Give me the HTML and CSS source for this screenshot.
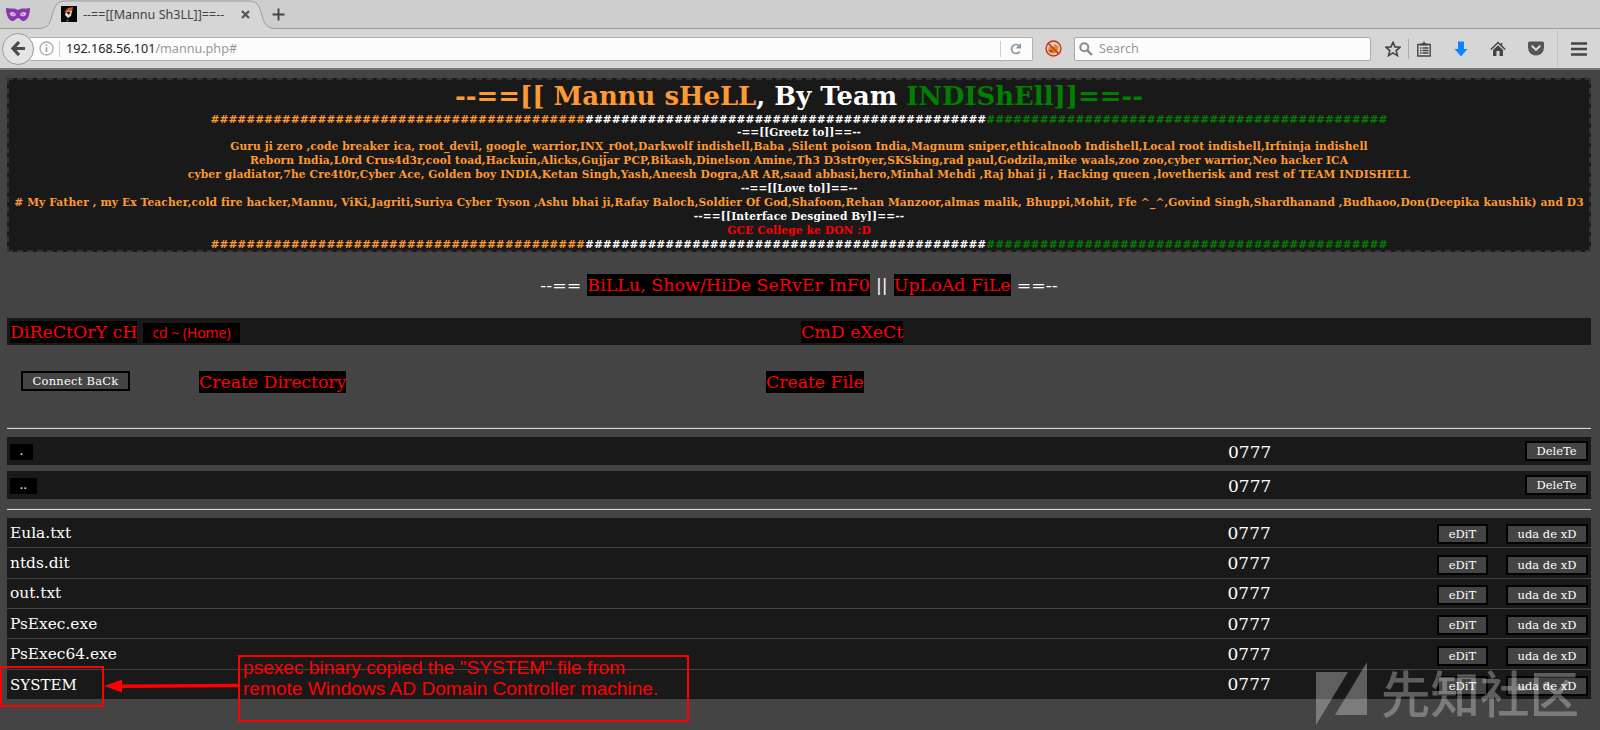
FILE: index.html
```html
<!DOCTYPE html>
<html lang="en">
<head>
<meta charset="utf-8">
<title>--==[[Mannu Sh3LL]]==--</title>
<link rel="stylesheet" href="styles.css">
</head>
<body>
<div class="browser">
  <div class="tabstrip">
    <svg class="tab-shape" width="290" height="30" viewBox="0 0 290 30"><path d="M0 28.500H38C50 28.500 50 22 52.500 14C55 5 57 1 66 1H248C257 1 259 5 261.500 14C264 22 265 28.500 276 28.500H290V30H0Z" fill="#d6d6d6"/><path d="M0 28.500H38C50 28.500 50 22 52.500 14C55 5 57 1 66 1H248C257 1 259 5 261.500 14C264 22 265 28.500 276 28.500H290" fill="none" stroke="#9a9da2"/></svg>
    <svg class="mask" width="24" height="15" viewBox="0 0 24 15"><path d="M0 1C5 2 8 .5 12 3C16 .5 19 2 24 1C24 6 22.500 13 18 14C15 14.500 14 11 12 11C10 11 9 14.500 6 14C1.500 13 0 6 0 1Z" fill="#8a35ac"/><path d="M3.500 6.500C6 4 9 5 10 8C8 10 5 10 3.500 6.500ZM20.500 6.500C18 4 15 5 14 8C16 10 19 10 20.500 6.500Z" fill="#dcc6e4"/><path d="M5.500 7.200C7 6 8 6.500 8.500 7.800C7.500 8.500 6.500 8.500 5.500 7.200ZM18.500 7.200C17 6 16 6.500 15.500 7.800C16.500 8.500 17.500 8.500 18.500 7.200Z" fill="#a56abf"/></svg>
    <svg class="favicon" width="16" height="16" viewBox="0 0 16 16"><path d="M0 0H16V16H0Z" fill="#080808"/><path d="M4 5L7 2L12 1L11 6L5 8Z" fill="#d85a24"/><path d="M5 6L11 5L10 10L7 12L4 9Z" fill="#e8d8d0"/><path d="M5 6L9.500 6L8 9Z" fill="#2a1a16"/><path d="M6 13L8 13.500L7 16H5Z" fill="#166a22"/></svg>
    <span class="tab-title">--==[[Mannu Sh3LL]]==--</span>
    <svg class="tab-close" width="9" height="9" viewBox="0 0 9 9"><path d="M1 1L8 8M8 1L1 8" stroke="#555" stroke-width="2.200"/></svg>
    <svg class="tab-new" width="13" height="13" viewBox="0 0 13 13"><path d="M6.500 .5V12.500M.5 6.500H12.500" stroke="#444" stroke-width="1.900"/></svg>
  </div>
  <div class="toolbar">
    <div class="back"><svg width="15" height="15" viewBox="0 0 15 15"><path d="M8 1L2 7.500L8 14M2.500 7.500H14" fill="none" stroke="#4b4b4b" stroke-width="3.200"/></svg></div>
    <div class="urlbar">
      <svg width="15" height="15" viewBox="0 0 15 15"><circle cx="7.500" cy="7.500" r="6.500" fill="none" stroke="#aaa" stroke-width="1.300"/><path d="M7.500 6.300V11M7.500 3.500V5" stroke="#999" stroke-width="1.500"/></svg>
      <i class="split"></i>
      <span class="url"><b>192.168.56.101</b>/mannu.php#</span>
      <i class="split split-end"></i>
      <svg width="12" height="12" viewBox="0 0 12 12"><path d="M9.800 8.500A4.500 4.500 0 1 1 9.200 2.800" fill="none" stroke="#8a97a3" stroke-width="1.700"/><path d="M11 0V5.500H5.500Z" fill="#8a97a3"/></svg>
    </div>
    <svg class="noentry" width="17" height="17" viewBox="0 0 17 17"><circle cx="8.500" cy="8.500" r="7.500" fill="#d9cabd"/><path d="M4 7L6.500 6L8 7.500L10 4L12 6L13.500 5L13 9L12 13L7 13.500L3 11Z" fill="#e08a18"/><path d="M4 10H8L7.500 12.500H5Z" fill="#a0561a"/><circle cx="8.500" cy="8.500" r="7.500" fill="none" stroke="#cf2a22" stroke-width="1.300"/><path d="M3 3L14 14" stroke="#cf2a22" stroke-width="1.500"/></svg>
    <div class="search"><svg width="14" height="14" viewBox="0 0 14 14"><circle cx="5.300" cy="5.300" r="4" fill="none" stroke="#8b8b8b" stroke-width="2"/><path d="M8.300 8.300L13 13" stroke="#8b8b8b" stroke-width="2.400"/></svg><span>Search</span></div>
    <div class="tools">
      <svg width="16" height="16" viewBox="0 0 16 16"><path d="M8 1.300L10 5.900L15 6.300L11.200 9.600L12.400 14.600L8 11.900L3.600 14.600L4.800 9.600L1 6.300L6 5.900Z" fill="none" stroke="#444" stroke-width="1.600"/></svg>
      <i></i>
      <svg width="16" height="16" viewBox="0 0 16 16"><path d="M1.800 3.500H14.200V15H1.800ZM4 7H5.500M6.500 7H12.500M4 9.500H5.500M6.500 9.500H12.500M4 12H5.500M6.500 12H12.500" fill="none" stroke="#444" stroke-width="1.400"/><path d="M4.500 4.500V2.500H6.500L8 .2L9.500 2.500H11.500V4.500Z" fill="#444"/></svg>
      <svg width="14" height="16" viewBox="0 0 14 16"><path d="M4 .5H10V8H13.500L7 15.500L.5 8H4Z" fill="#0b84ff"/></svg>
      <svg width="16" height="16" viewBox="0 0 16 16"><path d="M.8 8.500L8 1.500L15.200 8.500M11.500 2V5" fill="none" stroke="#444" stroke-width="1.500"/><path d="M8 4.200L13 9V15H9.500V10H6.500V15H3V9Z" fill="#444"/></svg>
      <svg width="16" height="15" viewBox="0 0 16 15"><path d="M1.500 .5H14.500Q16 .5 16 2V6.500A8 8 0 0 1 0 6.500V2Q0 .5 1.500 .5Z" fill="#555"/><path d="M4.300 5.300L8 8.900L11.700 5.300" fill="none" stroke="#ddd" stroke-width="2" stroke-linecap="round"/></svg>
      <i class="tall"></i>
      <svg width="16" height="14" viewBox="0 0 16 14"><path d="M0 1.500H16M0 7H16M0 12.500H16" stroke="#444" stroke-width="2.600"/></svg>
    </div>
  </div>
</div>

<main class="shell">
  <header class="banner">
    <h1><span class="o">--==[[ Mannu sHeLL</span>, By Team <span class="g">INDIShEll]]==--</span></h1>
    <p class="hashes"><span class="o">##########################################</span><span class="w">#############################################</span><span class="g">#############################################</span></p>
    <p class="w">-==[[Greetz to]]==--</p>
    <p class="names names-first">Guru ji zero ,code breaker ica, root_devil, google_warrior,INX_r0ot,Darkwolf indishell,Baba ,Silent poison India,Magnum sniper,ethicalnoob Indishell,Local root indishell,Irfninja indishell</p>
    <p class="names">Reborn India,L0rd Crus4d3r,cool toad,Hackuin,Alicks,Gujjar PCP,Bikash,Dinelson Amine,Th3 D3str0yer,SKSking,rad paul,Godzila,mike waals,zoo zoo,cyber warrior,Neo hacker ICA</p>
    <p class="names">cyber gladiator,7he Cre4t0r,Cyber Ace, Golden boy INDIA,Ketan Singh,Yash,Aneesh Dogra,AR AR,saad abbasi,hero,Minhal Mehdi ,Raj bhai ji , Hacking queen ,lovetherisk and rest of TEAM INDISHELL</p>
    <p class="w">--==[[Love to]]==--</p>
    <p class="names"># My Father , my Ex Teacher,cold fire hacker,Mannu, ViKi,Jagriti,Suriya Cyber Tyson ,Ashu bhai ji,Rafay Baloch,Soldier Of God,Shafoon,Rehan Manzoor,almas malik, Bhuppi,Mohit, Ffe ^_^,Govind Singh,Shardhanand ,Budhaoo,Don(Deepika kaushik) and D3</p>
    <p class="names w">--==[[Interface Desgined By]]==--</p>
    <p class="names r">GCE College ke DON :D</p>
    <p class="hashes"><span class="o">##########################################</span><span class="w">#############################################</span><span class="g">#############################################</span></p>
  </header>

  <nav class="links">--== <a>BiLLu, Show/HiDe SeRvEr InF0</a> || <a>UpLoAd FiLe</a> ==--</nav>

  <div class="bar">
    <div class="bar-dir"><a>DiReCtOrY cH</a><span class="home">cd ~ (Home)</span></div>
    <div><a>CmD eXeCt</a></div>
  </div>

  <div class="create">
    <span class="btn connect">Connect BaCk</span>
    <a class="mkdir">Create Directory</a>
    <a class="mkfile">Create File</a>
  </div>

  <hr>
  <div class="row dir"><span class="dots">.</span><span class="perm">0777</span><span class="btn del">DeleTe</span></div>
  <div class="row dir"><span class="dots">..</span><span class="perm">0777</span><span class="btn del">DeleTe</span></div>
  <hr class="hr2">
  <div class="row file"><span>Eula.txt</span><span class="perm">0777</span><span class="btn edit">eDiT</span><span class="btn uda">uda de xD</span></div>
  <div class="row file"><span>ntds.dit</span><span class="perm">0777</span><span class="btn edit">eDiT</span><span class="btn uda">uda de xD</span></div>
  <div class="row file"><span>out.txt</span><span class="perm">0777</span><span class="btn edit">eDiT</span><span class="btn uda">uda de xD</span></div>
  <div class="row file"><span>PsExec.exe</span><span class="perm">0777</span><span class="btn edit">eDiT</span><span class="btn uda">uda de xD</span></div>
  <div class="row file"><span>PsExec64.exe</span><span class="perm">0777</span><span class="btn edit">eDiT</span><span class="btn uda">uda de xD</span></div>
  <div class="row file"><span class="caps">SYSTEM</span><span class="perm">0777</span><span class="btn edit">eDiT</span><span class="btn uda">uda de xD</span></div>
</main>

<div class="mark"></div>
<svg class="arrow" width="134" height="14" viewBox="0 0 134 14"><path d="M17 7.200L134 6.500" stroke="#f00" stroke-width="3.500"/><path d="M0 7L18 .5V13.500Z" fill="#f00"/></svg>
<div class="note">psexec binary copied the "SYSTEM" file from<br>remote Windows AD Domain Controller machine.</div>
<div class="watermark"><svg width="51" height="64" viewBox="0 0 51 64"><path d="M0 10H32L0 63ZM51 0V53H19Z" fill="#fff"/></svg><span>先知社区</span></div>
</body>
</html>
```
FILE: styles.css
```css
* { box-sizing: border-box; }
body { margin: 0; width: 1600px; height: 730px; overflow: hidden; position: relative; background: #444; font-family: "DejaVu Serif", serif; color: #fff; }

/* browser chrome */
.browser { height: 70px; background: #d6d6d6; border-bottom: 2px solid #777; font-family: "Noto Sans", "Open Sans", sans-serif; font-size: 12.600px; }
.tabstrip { position: relative; height: 29px; background: #cecece; border-bottom: 1px solid #9a9da2; display: flex; align-items: center; padding-left: 6px; }
.tabstrip > * { position: relative; flex: none; }
.tabstrip .tab-shape { position: absolute; left: 0; top: 0; }
.favicon { margin-left: 31px; }
.tab-title { margin-left: 6px; width: 141px; color: #444; white-space: nowrap; font-size: 12.550px; }
.tab-close { margin-left: 17px; }
.tab-new { margin-left: 22px; }
.toolbar { height: 39px; display: flex; align-items: center; padding-left: 2px; }
.back { position: relative; width: 32px; height: 32px; border-radius: 50%; border: 1.500px solid #9b9b9b; background: #e4e4e4; display: flex; align-items: center; justify-content: center; flex: none; }
.urlbar { margin-left: -5px; width: 1004px; height: 24px; background: #fcfcfc; border: 1px solid #b0b0b0; border-left: 0; border-radius: 2px; display: flex; align-items: center; padding-left: 10px; flex: none; }
.split { width: 1px; height: 16px; background: #ccc; margin-left: 5px; }
.url { margin-left: 6px; color: #999; flex: 1; }
.url b { color: #222; font-weight: 400; }
.split-end { margin: 0 9px 0 0; }
.urlbar svg:last-child { margin-right: 10px; }
.noentry { margin-left: 12px; flex: none; }
.search { margin-left: 12px; width: 297px; height: 24px; background: #fcfcfc; border: 1px solid #aaa; border-radius: 2px; display: flex; align-items: center; padding-left: 4px; gap: 6px; color: #999; flex: none; }
.tools { flex: 1; display: flex; align-items: center; }
.tools svg { flex: none; margin-left: 22px; }
.tools svg:first-child { margin-left: 14px; }
.tools i { width: 1px; height: 20px; background: #aaa; margin-left: 7px; }
.tools i + svg { margin-left: 7px; }
.tools .tall { height: 37px; margin-left: 13px; background: #c4c4c4; }
.tools .tall + svg { margin-left: 13px; }

/* shell page */
.shell { padding: 8px 9px 0 7px; }
.banner { height: 174px; border: 2px dashed #333; background: #191919; text-align: center; font-weight: 700; font-size: 10.650px; color: #ff9933; padding-top: 1px; }
.banner h1 { margin: 0; font-size: 25.900px; line-height: 30px; padding-bottom: 1.500px; color: #fff; white-space: nowrap; }
.banner p { margin: 0; line-height: 13.900px; white-space: nowrap; }
.banner .names { letter-spacing: .136px; }
.banner .names-first { letter-spacing: .116px; }
.banner .o { color: #ff9933; }
.banner .w { color: #fff; }
.banner .g { color: #008000; }
.banner .r { color: #f00; }
a { display: inline-block; background: #000; color: #f00; font-size: 17.350px; line-height: 22px; height: 22px; white-space: nowrap; }
.links { margin-top: 22px; height: 22px; line-height: 22px; text-align: center; font-size: 17.350px; letter-spacing: .07px; word-spacing: .4px; white-space: nowrap; }
.links a { word-spacing: 0; }
.bar { margin-top: 22px; height: 27px; background: #191919; display: flex; align-items: center; padding-left: 3px; }
.bar-dir { width: 791px; display: flex; align-items: center; }
.bar-dir a { width: 127px; }
.home { margin: 2px 0 0 6px; width: 97px; height: 20px; background: #000; color: #f00; font: 13.900px/19px "Noto Sans", sans-serif; text-align: center; }
.create { height: 82px; padding: 26px 0 0 14px; display: flex; align-items: flex-start; }
.create a { font-size: 17.250px; }
.btn { border: 2px solid #000; background: #444; color: #fff; font-size: 11.500px; height: 20px; line-height: 17px; text-align: center; white-space: nowrap; }
.connect { width: 109px; letter-spacing: .25px; }
.mkdir { margin-left: 69px; width: 147px; }
.mkfile { margin-left: 420px; }
hr { margin: 0; height: 2px; border: 0; border-top: 1px solid #555; border-bottom: 1px solid #d8d8d8; }
.create + hr { margin-bottom: 8px; }
.row { background: #191919; display: grid; padding: 0 3px; align-items: center; white-space: nowrap; }
.dir { height: 28px; grid-template-columns: 1218px 1fr 63px; margin-bottom: 6px; font-size: 16px; }
.dots { justify-self: start; background: #000; height: 16px; line-height: 14px; padding: 0 9.500px; font-size: 12px; margin-top: 1px; }
.perm { font-size: 17px; }
.dir .perm { padding-top: 1px; }
.hr2 { margin: 9px 0 8px; }
.file { height: 29.250px; margin-bottom: 1.100px; font-size: 15.400px; grid-template-columns: 1217.500px 209.500px 1fr 82px; }
.file .btn { margin-top: 3.500px; }
.caps { font-size: 15px; padding-top: 1px; }
.edit { width: 51px; }

/* annotations over the page */
.mark { position: absolute; left: 0; top: 666px; width: 104px; height: 41px; border: 2px solid #f00; }
.arrow { position: absolute; left: 104px; top: 679px; }
.note { position: absolute; left: 238px; top: 655px; width: 451px; height: 67px; border: 2px solid #f00; padding: 1px 3px; color: #f00; font: 19.130px/20.500px "Liberation Sans", sans-serif; white-space: nowrap; }
.watermark { position: absolute; left: 1316px; top: 662px; display: flex; opacity: .3; }
.watermark span { margin-left: 14px; font: 500 49.500px/60px "Noto Sans CJK SC", sans-serif; white-space: nowrap; }
```
